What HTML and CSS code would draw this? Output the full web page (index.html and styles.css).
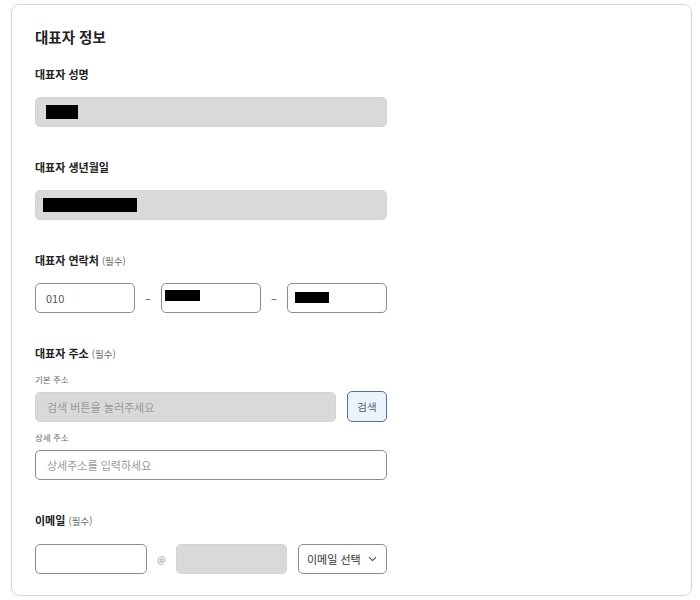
FILE: index.html
```html
<!DOCTYPE html>
<html lang="ko">
<head>
    <meta charset="UTF-8">
    <meta name="viewport" content="width=device-width, initial-scale=1.0">
    <title>대표자 정보</title>
    <link rel="stylesheet" href="styles.css">
</head>
<body>

    <div class="card">
        <h2>대표자 정보</h2>

        <!-- 성명 -->
        <div class="group">
            <label>대표자 성명</label>
            <div class="field readonly"><span class="redact" style="width:32px;margin-left:10px"></span></div>
        </div>

        <!-- 생년월일 -->
        <div class="group">
            <label>대표자 생년월일</label>
            <div class="field readonly"><span class="redact" style="width:94px;margin-left:7px"></span></div>
        </div>

        <!-- 연락처 -->
        <div class="group">
            <label>대표자 연락처 <em>(필수)</em></label>
            <div class="row phone">
                <div class="field"><span class="value">010</span></div>
                <span class="sep">–</span>
                <div class="field"><span class="redact small" style="width:35px;margin:0 0 5px 3px"></span></div>
                <span class="sep">–</span>
                <div class="field"><span class="redact small" style="width:34px;margin:0 0 1px 7px"></span></div>
            </div>
        </div>

        <!-- 주소 -->
        <div class="group">
            <label>대표자 주소 <em>(필수)</em></label>
            <div class="sub">기본 주소</div>
            <div class="row">
                <input class="field readonly grow" type="text" placeholder="검색 버튼을 눌러주세요" readonly>
                <button class="btn-search">검색</button>
            </div>
            <div class="sub sub2">상세 주소</div>
            <input class="field" type="text" placeholder="상세주소를 입력하세요">
        </div>

        <!-- 이메일 -->
        <div class="group">
            <label>이메일 <em>(필수)</em></label>
            <div class="row email">
                <input class="field mail-id" type="text">
                <span class="at">@</span>
                <input class="field readonly mail-domain" type="text" readonly>
                <div class="field select">
                    <span>이메일 선택</span>
                    <svg width="9" height="6" viewBox="0 0 9 6"><path d="M1 1.2 L4.5 4.6 L8 1.2" fill="none" stroke="#444" stroke-width="1.1"/></svg>
                </div>
            </div>
        </div>
    </div>

</body>
</html>
```

FILE: styles.css
```css
/* Estilo general */
body {
    font-family: "Noto Sans CJK KR", "Noto Sans", sans-serif;
    margin: 0;
    padding: 4px 8px 4px 11px;
    background-color: #ffffff;
    color: #222;
}

.card {
    border: 1px solid #d6d6d6;
    border-radius: 8px;
    padding: 22px 23px 22px 23px;
    height: 592px;
    box-sizing: border-box;
}

h2 {
    font-size: 14.5px;
    line-height: 20px;
    font-weight: bold;
    margin: 0 0 19px 0;
    color: #222;
}

.group {
    width: 352px;
    margin-bottom: 32px;
}

.group:last-child {
    margin-bottom: 0;
}

label {
    display: block;
    font-size: 11px;
    line-height: 16px;
    font-weight: bold;
    color: #222;
    margin-bottom: 15px;
}

label em {
    font-style: normal;
    font-weight: normal;
    font-size: 9.5px;
    color: #666;
}

.group:nth-child(4) label,
.group:nth-child(5) label {
    margin-bottom: 14px;
}

.sub {
    font-size: 8.5px;
    line-height: 12px;
    color: #666;
    margin: -3px 0 6px 0;
}

.sub2 {
    margin: 9px 0 7px 0;
}

/* Campos */
.field {
    display: flex;
    align-items: center;
    box-sizing: border-box;
    width: 100%;
    height: 30px;
    padding: 0 11px;
    border: 1px solid #8c8c8c;
    border-radius: 5px;
    background-color: #fff;
    font-family: inherit;
    font-size: 11px;
    color: #555;
    outline: none;
}

.field::placeholder {
    color: #9a9a9a;
}

.field.readonly {
    background-color: #d9d9d9;
    border-color: #d4d4d4;
    padding: 0;
}

input.field.readonly {
    padding: 0 11px;
}

.redact {
    display: inline-block;
    height: 14px;
    background-color: #000;
}

.redact.small {
    height: 11px;
}

.row {
    display: flex;
    align-items: center;
}

.phone .field {
    flex: 1 1 0;
    min-width: 0;
    padding: 0;
}

.phone .value {
    margin-left: 10px;
}

.sep {
    width: 26px;
    flex: none;
    text-align: center;
    font-size: 11px;
    color: #444;
}

.grow {
    flex: 1;
}

.btn-search {
    width: 40px;
    height: 31px;
    margin-left: 11px;
    background-color: #edf3fa;
    border: 1px solid #56718d;
    border-radius: 5px;
    font-family: inherit;
    font-size: 10.5px;
    color: #4d6781;
    padding: 0;
}

/* Email */
.mail-id {
    width: 112px;
    flex: none;
}

.at {
    width: 29px;
    text-align: center;
    font-size: 9px;
    color: #888;
}

.mail-domain {
    width: 111px;
    flex: none;
}

.select {
    width: 89px;
    flex: none;
    margin-left: 11px;
    padding: 0 9px 0 8px;
    justify-content: space-between;
    font-size: 11px;
    color: #333;
}
```
